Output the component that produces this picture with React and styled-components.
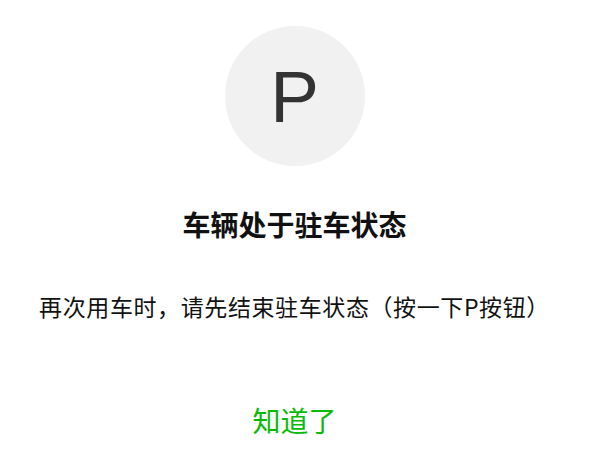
import React from 'react';
import styled, { createGlobalStyle } from 'styled-components';

const GlobalStyle = createGlobalStyle`
  html, body {
    margin: 0;
    padding: 0;
    background: #fff;
  }
  body {
    font-family: "Noto Sans CJK SC", "Noto Sans", sans-serif;
  }
`;

const Dialog = styled.div`
  width: 589px;
  height: 474px;
  display: flex;
  flex-direction: column;
  align-items: center;
  box-sizing: border-box;
  padding-top: 26px;
`;

const Badge = styled.div`
  width: 140px;
  height: 140px;
  border-radius: 50%;
  background: #f1f1f1;
  display: flex;
  align-items: center;
  justify-content: center;
  font-family: "Liberation Sans", Arial, sans-serif;
  font-size: 73px;
  color: #333;
  line-height: 1;
`;

const Title = styled.h2`
  margin: 38px 0 0;
  font-size: 28px;
  line-height: 40px;
  font-weight: 700;
  color: #111;
`;

const Message = styled.p`
  margin: 46px 0 0;
  font-size: 23px;
  letter-spacing: 0.6px;
  line-height: 32px;
  color: #111;
  text-align: center;
  white-space: nowrap;
`;

const ConfirmButton = styled.button`
  margin-top: 78px;
  padding: 0;
  border: none;
  background: none;
  font-family: inherit;
  font-size: 28px;
  line-height: 40px;
  color: #09bb07;
  cursor: pointer;
`;

export default function App() {
  return (
    <>
      <GlobalStyle />
      <Dialog>
        <Badge>P</Badge>
        <Title>车辆处于驻车状态</Title>
        <Message>再次用车时，请先结束驻车状态（按一下P按钮）</Message>
        <ConfirmButton>知道了</ConfirmButton>
      </Dialog>
    </>
  );
}
